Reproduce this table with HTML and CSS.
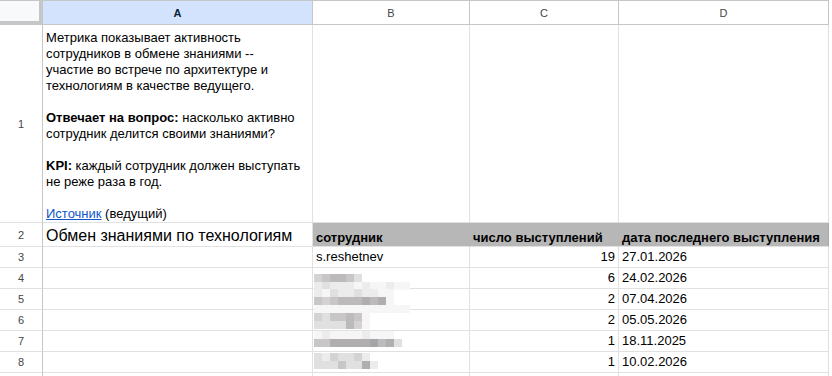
FILE: index.html
```html
<!DOCTYPE html>
<html lang="ru">
<head>
<meta charset="utf-8">
<title>Обмен знаниями</title>
<link rel="stylesheet" href="styles.css">
</head>
<body>
<div class="sheet">
  <div class="corner"></div>
  <div class="colhead sel">A</div>
  <div class="colhead">B</div>
  <div class="colhead">C</div>
  <div class="colhead">D</div>

  <div class="rowhead">1</div>
  <div class="cell desc">
    <div>Метрика показывает активность<br>сотрудников в обмене знаниями --<br>участие во встрече по архитектуре и<br>технологиям в качестве ведущего.</div>
    <div class="gap"></div>
    <div><b>Отвечает на вопрос:</b> насколько активно<br>сотрудник делится своими знаниями?</div>
    <div class="gap"></div>
    <div><b>KPI:</b> каждый сотрудник должен выступать<br>не реже раза в год.</div>
    <div class="gap"></div>
    <div><a href="#" class="link">Источник</a> (ведущий)</div>
  </div>
  <div class="cell"></div>
  <div class="cell"></div>
  <div class="cell"></div>

  <div class="rowhead">2</div>
  <div class="cell title">Обмен знаниями по технологиям</div>
  <div class="cell th">сотрудник</div>
  <div class="cell th">число выступлений</div>
  <div class="cell th last">дата последнего выступления</div>

  <div class="rowhead">3</div>
  <div class="cell"></div>
  <div class="cell">s.reshetnev</div>
  <div class="cell num">19</div>
  <div class="cell">27.01.2026</div>

  <div class="rowhead">4</div>
  <div class="cell"></div>
  <div class="cell blurcell">
    <div class="blur b4">
      <div class="band"><i class="s3"></i><i class="s4"></i><i class="s5"></i><i class="s5"></i><i class="s4"></i><i class="s2"></i></div>
      <div class="band"><i class="s1"></i><i class="s2"></i><i class="s1"></i><i class="s1"></i><i class="s1"></i><i class="s0"></i><i class="s1"></i><i class="s0"></i><i class="s0"></i><i class="s1"></i><i class="s0"></i><i class="s0"></i></div>
    </div>
  </div>
  <div class="cell num">6</div>
  <div class="cell">24.02.2026</div>

  <div class="rowhead">5</div>
  <div class="cell"></div>
  <div class="cell blurcell">
    <div class="blur b5">
      <div class="band"><i class="s1"></i><i class="s0"></i><i class="s2"></i><i class="s1"></i><i class="s1"></i><i class="s2"></i><i class="s1"></i><i class="s1"></i><i class="s0"></i><i class="s0"></i></div>
      <div class="band"><i class="s4"></i><i class="s3"></i><i class="s4"></i><i class="s5"></i><i class="s5"></i><i class="s5"></i><i class="s6"></i><i class="s5"></i><i class="s6"></i><i class="s0"></i></div>
      <div class="band"><i class="s0"></i><i class="s0"></i><i class="s0"></i><i class="s0"></i><i class="s0"></i><i class="s0"></i><i class="s0"></i><i class="s0"></i><i class="s0"></i><i class="s0"></i><i class="s0"></i><i class="s0"></i></div>
    </div>
  </div>
  <div class="cell num">2</div>
  <div class="cell">07.04.2026</div>

  <div class="rowhead">6</div>
  <div class="cell"></div>
  <div class="cell blurcell">
    <div class="blur b6">
      <div class="band"><i class="s3"></i><i class="s2"></i><i class="s4"></i><i class="s4"></i><i class="s5"></i><i class="s4"></i><i class="s0"></i></div>
      <div class="band"><i class="s2"></i><i class="s2"></i><i class="s2"></i><i class="s2"></i><i class="s5"></i><i class="s3"></i><i class="s0"></i></div>
    </div>
  </div>
  <div class="cell num">2</div>
  <div class="cell">05.05.2026</div>

  <div class="rowhead">7</div>
  <div class="cell"></div>
  <div class="cell blurcell">
    <div class="blur b7">
      <div class="band"><i class="s0"></i><i class="s1"></i><i class="s0"></i><i class="s0"></i><i class="s0"></i><i class="s0"></i><i class="s1"></i><i class="s0"></i><i class="s0"></i><i class="s0"></i></div>
      <div class="band"><i class="s4"></i><i class="s4"></i><i class="s6"></i><i class="s6"></i><i class="s6"></i><i class="s6"></i><i class="s6"></i><i class="s7"></i><i class="s5"></i><i class="s6"></i><i class="s2"></i></div>
    </div>
  </div>
  <div class="cell num">1</div>
  <div class="cell">18.11.2025</div>

  <div class="rowhead">8</div>
  <div class="cell"></div>
  <div class="cell blurcell">
    <div class="blur b8">
      <div class="band"><i class="s2"></i><i class="s1"></i><i class="s3"></i><i class="s2"></i><i class="s2"></i><i class="s3"></i><i class="s1"></i></div>
      <div class="band"><i class="s2"></i><i class="s2"></i><i class="s2"></i><i class="s4"></i><i class="s2"></i><i class="s2"></i><i class="s6"></i><i class="s1"></i></div>
    </div>
  </div>
  <div class="cell num">1</div>
  <div class="cell">10.02.2026</div>

  <div class="rowhead"></div>
  <div class="cell"></div>
  <div class="cell"></div>
  <div class="cell"></div>
  <div class="cell"></div>
</div>
</body>
</html>
```
FILE: styles.css
```css
* { box-sizing: border-box; }
html, body { margin: 0; padding: 0; background: #fff; }
body {
  font-family: "Liberation Sans", Arial, sans-serif;
  font-size: 13px;
  color: #000;
  overflow: hidden;
}
.sheet {
  display: grid;
  grid-template-columns: 43px 270px 157px 149px 210px;
  grid-template-rows: 24px 198px 24px repeat(7, 21px);
  border-top: 1px solid #c4c7c5;
  width: 829px;
}
.corner {
  background: #f8f9fa;
  border-right: 4px solid #c4c7c5;
  border-bottom: 4px solid #c4c7c5;
}
.colhead {
  display: flex;
  align-items: center;
  justify-content: center;
  font-size: 11px;
  color: #444746;
  background: #fff;
  border-right: 1px solid #c4c7c5;
  border-bottom: 1px solid #c4c7c5;
}
.colhead.sel {
  background: #d3e3fd;
  color: #0b1f3a;
  font-weight: bold;
}
.rowhead {
  display: flex;
  align-items: center;
  justify-content: center;
  font-size: 11px;
  color: #444746;
  background: #fff;
  border-right: 1px solid #c4c7c5;
  border-bottom: 1px solid #e1e1e1;
}
.cell {
  border-right: 1px solid #e1e1e1;
  border-bottom: 1px solid #e1e1e1;
  padding: 0 3px;
  line-height: 20px;
  white-space: nowrap;
  overflow: visible;
  min-width: 0;
}
.desc {
  display: flex;
  flex-direction: column;
  justify-content: flex-end;
  line-height: 16px;
  padding-bottom: 0;
}
.gap { height: 16px; }
.link { color: #1155cc; text-decoration: underline; }
.title {
  display: flex;
  align-items: flex-end;
  font-size: 16px;
  line-height: 20px;
}
.th {
  display: flex;
  align-items: flex-end;
  font-weight: bold;
  line-height: 16px;
  background: #b7b7b7;
  border-right-color: #b7b7b7;
  border-bottom-color: #e1e1e1;
}
.th.last { border-right-color: #a9a9a9; }
.num { text-align: right; }
.blurcell { padding: 0; position: relative; }
.blur { display: flex; flex-direction: column; padding-left: 1px; }
.band { display: flex; height: 8px; }
.band i { display: block; width: 8px; height: 8px; }
.b4 { margin-top: 6px; }
.b5 { margin-top: 0; }
.b6 { margin-top: 3px; }
.b7 { margin-top: 0; }
.b8 { margin-top: 1px; }
.s0 { background: #f6f6f6; }
.s1 { background: #ececec; }
.s2 { background: #e0e0e0; }
.s3 { background: #d4d2d2; }
.s4 { background: #c8c6c6; }
.s5 { background: #bcbaba; }
.s6 { background: #b0aeae; }
.s7 { background: #a3a6a8; }
```
